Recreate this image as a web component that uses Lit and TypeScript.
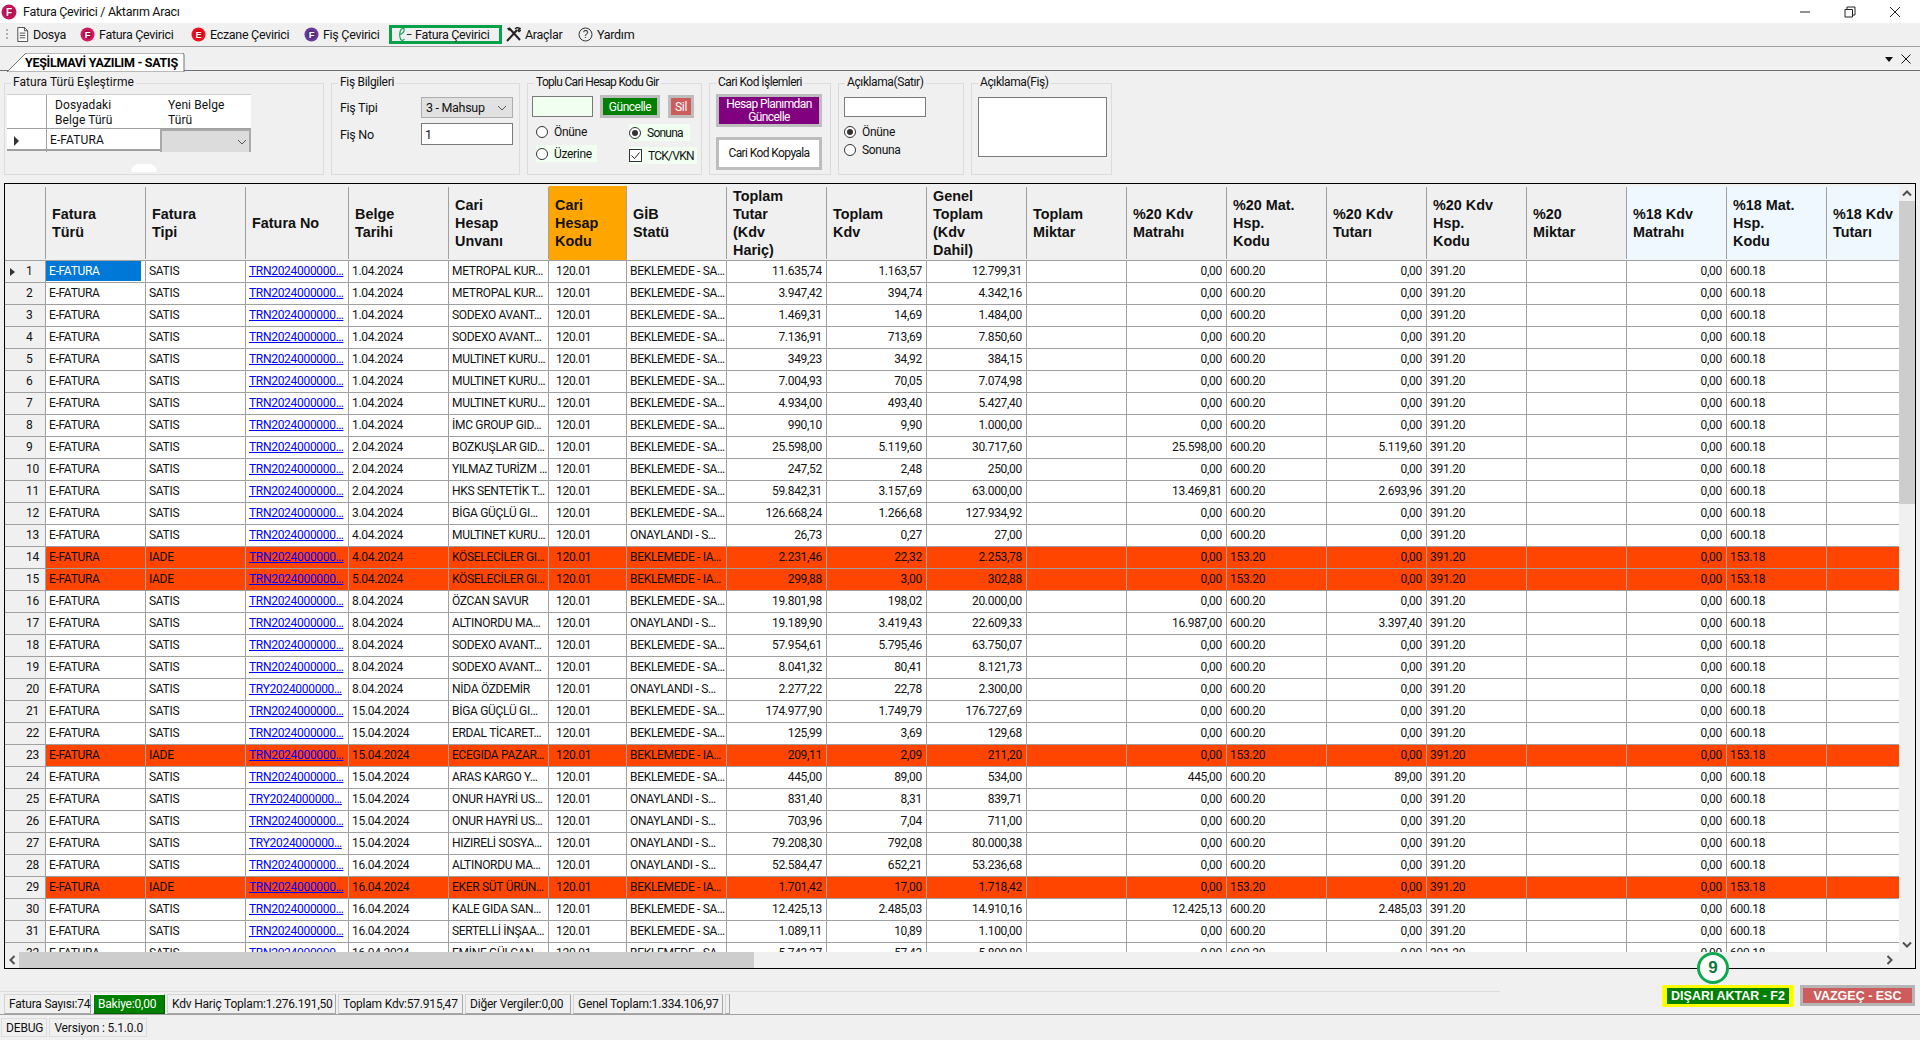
import { LitElement, html, css, svg } from "lit";
import { customElement } from "lit/decorators.js";

const headers: [string, string][] = [
  ["", ""],
  ["Fatura|Türü", ""],
  ["Fatura|Tipi", ""],
  ["Fatura No", ""],
  ["Belge|Tarihi", ""],
  ["Cari|Hesap|Unvanı", ""],
  ["Cari|Hesap|Kodu", "orange"],
  ["GİB|Statü", ""],
  ["Toplam|Tutar|(Kdv|Hariç)", ""],
  ["Toplam|Kdv", ""],
  ["Genel|Toplam|(Kdv|Dahil)", ""],
  ["Toplam|Miktar", ""],
  ["%20 Kdv|Matrahı", ""],
  ["%20 Mat.|Hsp.|Kodu", ""],
  ["%20 Kdv|Tutarı", ""],
  ["%20 Kdv|Hsp.|Kodu", ""],
  ["%20|Miktar", ""],
  ["%18 Kdv|Matrahı", "alice"],
  ["%18 Mat.|Hsp.|Kodu", "alice"],
  ["%18 Kdv|Tutarı", "alice"],
];

// type|prefix|date|name|status|tutar|kdv|toplam|m20|t20
const raw = `S|N|1.04.2024|METROPAL KUR…|B|11.635,74|1.163,57|12.799,31
S|N|1.04.2024|METROPAL KUR…|B|3.947,42|394,74|4.342,16
S|N|1.04.2024|SODEXO AVANT…|B|1.469,31|14,69|1.484,00
S|N|1.04.2024|SODEXO AVANT…|B|7.136,91|713,69|7.850,60
S|N|1.04.2024|MULTINET KURU…|B|349,23|34,92|384,15
S|N|1.04.2024|MULTINET KURU…|B|7.004,93|70,05|7.074,98
S|N|1.04.2024|MULTINET KURU…|B|4.934,00|493,40|5.427,40
S|N|1.04.2024|İMC GROUP GID…|B|990,10|9,90|1.000,00
S|N|2.04.2024|BOZKUŞLAR GID…|B|25.598,00|5.119,60|30.717,60|25.598,00|5.119,60
S|N|2.04.2024|YILMAZ TURİZM …|B|247,52|2,48|250,00
S|N|2.04.2024|HKS SENTETİK T…|B|59.842,31|3.157,69|63.000,00|13.469,81|2.693,96
S|N|3.04.2024|BİGA GÜÇLÜ GI…|B|126.668,24|1.266,68|127.934,92
S|N|4.04.2024|MULTINET KURU…|O|26,73|0,27|27,00
I|N|4.04.2024|KÖSELECİLER GI…|B|2.231,46|22,32|2.253,78
I|N|5.04.2024|KÖSELECİLER GI…|B|299,88|3,00|302,88
S|N|8.04.2024|ÖZCAN SAVUR|B|19.801,98|198,02|20.000,00
S|N|8.04.2024|ALTINORDU MA…|O|19.189,90|3.419,43|22.609,33|16.987,00|3.397,40
S|N|8.04.2024|SODEXO AVANT…|B|57.954,61|5.795,46|63.750,07
S|N|8.04.2024|SODEXO AVANT…|B|8.041,32|80,41|8.121,73
S|Y|8.04.2024|NİDA ÖZDEMİR|O|2.277,22|22,78|2.300,00
S|N|15.04.2024|BİGA GÜÇLÜ GI…|B|174.977,90|1.749,79|176.727,69
S|N|15.04.2024|ERDAL TİCARET…|B|125,99|3,69|129,68
I|N|15.04.2024|ECEGIDA PAZAR…|B|209,11|2,09|211,20
S|N|15.04.2024|ARAS KARGO Y…|B|445,00|89,00|534,00|445,00|89,00
S|Y|15.04.2024|ONUR HAYRİ US…|O|831,40|8,31|839,71
S|N|15.04.2024|ONUR HAYRİ US…|O|703,96|7,04|711,00
S|Y|15.04.2024|HIZIRELİ SOSYA…|O|79.208,30|792,08|80.000,38
S|N|16.04.2024|ALTINORDU MA…|O|52.584,47|652,21|53.236,68
I|N|16.04.2024|EKER SÜT ÜRÜN…|B|1.701,42|17,00|1.718,42
S|N|16.04.2024|KALE GIDA SAN…|B|12.425,13|2.485,03|14.910,16|12.425,13|2.485,03
S|N|16.04.2024|SERTELLİ İNŞAA…|B|1.089,11|10,89|1.100,00
S|N|16.04.2024|EMİNE GÜLCAN|B|5.743,37|57,43|5.800,80`;

const rows = raw.split("\n").map((l) => {
  const p = l.split("|");
  return {
    iade: p[0] === "I",
    no: (p[1] === "Y" ? "TRY" : "TRN") + "2024000000…",
    date: p[2],
    name: p[3],
    status: p[4] === "O" ? "ONAYLANDI - S…" : p[0] === "I" ? "BEKLEMEDE - IA…" : "BEKLEMEDE - SA…",
    tutar: p[5],
    kdv: p[6],
    toplam: p[7],
    m20: p[8] ?? "0,00",
    t20: p[9] ?? "0,00",
  };
});

const circle = (a: string, b: string, letter: string) => html`<svg class="ic" viewBox="0 0 16 16">
  <circle cx="8" cy="8" r="7.5" fill="${a}"></circle>
  <circle cx="8" cy="8" r="5" fill="${b}"></circle>
  <text x="8" y="11.5" text-anchor="middle" font-family="Liberation Sans" font-weight="700" font-size="10" fill="#fff">${letter}</text>
</svg>`;

const radio = (on = false) => html`<span class="radio ${on ? "on" : ""}"></span>`;

const hdr = (s: string) => s.split("|").map((t) => html`<span>${t}</span>`);

const doc = svg`<path d="M1.500 .5h7l3.500 3.500v11.500h-10.500z" fill="#fff" stroke="#444"/><path d="M8.500 .5v3.500h3.500M3.500 6.500h6M3.500 9h6M3.500 11.500h6" fill="none" stroke="#444"/>`;

@customElement("app-root")
export class AppRoot extends LitElement {
  static styles = css`
    :host {
      display: block;
      width: 1920px;
      height: 1040px;
      overflow: hidden;
      background: #f0f0f0;
      font-family: Roboto, "Noto Sans", sans-serif;
      font-size: 12px;
      letter-spacing: -0.3px;
      color: #111;
    }
    .page { display: flex; flex-direction: column; height: 1040px; }
    .title { height: 23px; background: #fff; display: flex; align-items: center; padding: 0 3px 0 1px; font-size: 12.5px; }
    .title .ic { width: 16px; height: 16px; margin-right: 6px; }
    .title .name { flex: 1; }
    .wbtn { width: 45px; display: flex; justify-content: center; }
    .wbtn svg { width: 12px; height: 12px; }
    .toolbar { height: 24px; box-sizing: border-box; border-bottom: 1px solid #a0a0a0; padding: 0 0 1px 16px; display: grid; grid-template-columns: 64px 111px 113px 85px 117px 72px 1fr; align-items: center; position: relative; font-size: 12.5px; }
    .grip { position: absolute; left: 6px; top: 6px; width: 2px; height: 11px; background: repeating-linear-gradient(#b0b0b0 0 2px, transparent 2px 4px); }
    .tool { display: flex; align-items: center; gap: 4px; height: 19px; }
    .ic { width: 15px; height: 15px; flex: none; }
    .doc { width: 13px; height: 15px; flex: none; }
    .boxed { box-sizing: border-box; width: 113px; border: 3px solid #0aa04a; padding-left: 5px; gap: 2px; }
    .boxed .ic { width: 16px; }
    .tabs { height: 24px; box-sizing: border-box; border-bottom: 1px solid #707070; display: flex; align-items: flex-end; justify-content: space-between; padding: 0 9px 0 7px; }
    .tab { position: relative; width: 178px; height: 18px; display: flex; align-items: center; padding-left: 18px; box-sizing: border-box; font-weight: 700; font-size: 12.5px; margin-bottom: -1px; color: #000; }
    .tab svg { position: absolute; left: 0; top: 0; width: 178px; height: 19px; }
    .tab span { position: relative; }
    .tabctl { display: flex; gap: 8px; align-items: center; height: 22px; }
    .tri { width: 0; height: 0; border: 4.5px solid transparent; border-top: 5px solid #111; border-bottom: 0; }
    .filters { height: 112px; box-sizing: border-box; padding: 4px 0 0 4px; display: flex; gap: 7px; }
    fieldset { margin: 0; padding: 0; height: 100px; box-sizing: border-box; border: 1px solid #dcdcdc; min-width: 0; position: relative; }
    legend { margin-left: 6px; padding: 0 2px; line-height: 15px; height: 16px; }
    .g1 { width: 320px; } .g2 { width: 189px; } .g3 { width: 175px; } .g4 { width: 122px; } .g5 { width: 126px; } .g6 { width: 141px; }
    .g1 legend { letter-spacing: 0.05px; }
    .g3 legend { letter-spacing: -0.7px; }
    .g4 legend { letter-spacing: -0.55px; }
    .g5 legend, .g6 legend { letter-spacing: -0.4px; }
    .mini { margin: 3px 0 0 2px; display: grid; grid-template-columns: 40px 113px 91px; grid-template-rows: 34px 23px; background: #fff; border-top: 1px solid #cfcfcf; box-sizing: border-box; width: 244px; height: 57px; border-bottom: 2px solid #a0a0a0; letter-spacing: 0.1px; }
    .mini > div { box-sizing: border-box; line-height: 15px; }
    .mh { padding: 3px 0 0 8px; border-bottom: 1px solid #a0a0a0; }
    .mh0 { border-right: 1px solid #a0a0a0; border-bottom: 1px solid #a0a0a0; }
    .mr0 { border-right: 1px solid #a0a0a0; display: flex; align-items: center; padding-left: 7px; }
    .mr1 { display: flex; align-items: center; padding-left: 3px; }
    .mselect { background: #dcdcdc; border: 2px solid #a9a9a9; border-bottom: 0; display: flex; align-items: center; justify-content: flex-end; padding-right: 2px; }
    .arrow { width: 0; height: 0; border: 4px solid transparent; border-left: 5px solid #333; border-right: 0; }
    .mr0 .arrow { border-width: 5px 0 5px 5px; }
    .hump { position: absolute; left: 126px; top: 73px; width: 26px; height: 8px; background: #fff; border-radius: 13px 13px 0 0; }
    .finfo { margin: 6px 0 0 8px; display: grid; grid-template-columns: 81px 92px; grid-template-rows: 21px 22px; row-gap: 5px; align-items: center; font-size: 12.5px; }
    .sel { box-sizing: border-box; height: 21px; background: #e1e1e1; border: 1px solid #adadad; display: flex; align-items: center; justify-content: space-between; padding: 0 5px 0 4px; }
    .inp { box-sizing: border-box; background: #fff; border: 1px solid #7a7a7a; display: flex; align-items: center; padding-left: 3px; }
    .finfo .inp { height: 22px; }
    .chev { width: 10px; height: 6px; flex: none; }
    .top3 { margin: 4px 0 0 4px; display: flex; align-items: center; }
    .top3 .inp { width: 61px; height: 21px; background: #f0fff0; margin-right: 7px; }
    .b { box-sizing: border-box; border: 3px solid #bdbdbd; display: flex; align-items: center; justify-content: center; text-align: center; }
    .bg { background: #008000; color: #fff; width: 60px; height: 23px; margin-right: 8px; letter-spacing: -0.5px; }
    .br { background: #cd5c5c; color: #fff; width: 26px; height: 23px; }
    .rgrid { margin: 5px 0 0 8px; display: grid; grid-template-columns: 93px 68px; grid-template-rows: 22px 20px; align-items: start; }
    .opt { display: flex; align-items: center; gap: 6px; height: 17px; }
    .hd { background: #f0fff0; }
    .w61 { width: 61px; }
    .mt1 { margin-top: 1px; } .mt2 { margin-top: 2px; }
    .tight { letter-spacing: -0.75px; }
    .radio { width: 12px; height: 12px; box-sizing: border-box; border: 1px solid #333; border-radius: 50%; background: #fff; flex: none; display: flex; align-items: center; justify-content: center; }
    .radio.on::after { content: ""; width: 6px; height: 6px; border-radius: 50%; background: #333; }
    .check { width: 13px; height: 13px; flex: none; }
    .btns4 { margin: 3px 0 0 6px; display: flex; flex-direction: column; gap: 10px; width: 106px; letter-spacing: -0.6px; }
    .btns4 .b { height: 33px; line-height: 13px; }
    .pur { background: #800080; color: #fff; }
    .wh { background: #fff; }
    .g5body { margin: 6px 0 0 5px; display: flex; flex-direction: column; }
    .g5body .inp { width: 82px; height: 20px; margin-bottom: 6px; }
    .g5body .opt { height: 18px; }
    .ta { margin: 6px 0 0 6px; width: 129px; height: 60px; box-sizing: border-box; background: #fff; border: 1px solid #7a7a7a; }
    .grid { margin-left: 4px; width: 1912px; height: 786px; box-sizing: border-box; border: 1px solid #000; padding-top: 2px; display: grid; grid-template-columns: 1fr 16px; grid-template-rows: 1fr 16px; }
    .view { overflow: hidden; background: #fff; }
    .row { display: grid; grid-template-columns: 41px 100px 100px 103px 100px 100px 78px repeat(13, 100px); width: 2000px; height: 22px; }
    .head { height: 75px; background: #f0f0f0; }
    .hc { box-sizing: border-box; display: flex; flex-direction: column; justify-content: center; padding: 0 0 0 6px; height: 75px; border-bottom: 1px solid #a0a0a0; font-family: "Liberation Sans", Arial, sans-serif; font-weight: 700; font-size: 14.4px; line-height: 18px; letter-spacing: 0; position: relative; }
    .hc::after { content: ""; position: absolute; right: 0; top: 1px; bottom: 1px; width: 1px; background: #a0a0a0; }
    .hc.orange { background: #ffa500; }
    .hc.alice { background: #f0f8ff; }
    .c { box-sizing: border-box; border-right: 1px solid #a0a0a0; border-bottom: 1px solid #a0a0a0; line-height: 21px; padding: 0 4px 0 3px; white-space: nowrap; overflow: hidden; }
    .r { text-align: right; padding-right: 4px; }
    .kod { padding-left: 7px; }
    .num { background: #f0f0f0; display: flex; align-items: center; padding: 0 0 0 5px; gap: 0; }
    .num b { font-weight: 400; margin-left: auto; width: 24px; text-align: left; padding-left: 5px; box-sizing: border-box; }
    .iade .c:not(.num) { background: #ff4500; }
    .sel1 { background: #0078d7; color: #fff; box-shadow: inset -4px 0 0 #fff, inset 0 -1px 0 #fff; }
    a { color: #0000ff; text-decoration: underline; }
    .vs { background: #f0f0f0; position: relative; display: flex; flex-direction: column; align-items: center; }
    .vs .btn { height: 15px; display: flex; align-items: center; justify-content: center; flex: none; }
    .vs .thumb { width: 16px; height: 303px; background: #cdcdcd; flex: none; }
    .vs .sp { flex: 1; }
    .hs { background: #f0f0f0; display: flex; align-items: center; padding: 0 6px 0 4px; }
    .hs .thumb { height: 16px; width: 735px; background: #cdcdcd; margin-left: 3px; }
    .hs .sp { flex: 1; }
    .corner { background: #f0f0f0; }
    .actions { height: 46px; box-sizing: border-box; border-bottom: 1px solid #a0a0a0; display: flex; justify-content: space-between; padding-right: 5px; }
    .stat { width: 1500px; margin-top: 22px; height: 23px; box-sizing: border-box; border-top: 1px solid #dcdcdc; padding: 2px 0 0 4px; display: flex; gap: 2px; letter-spacing: -0.2px; }
    .sb { box-sizing: border-box; height: 20px; border: 1px solid #d4d4d4; border-right-color: #a8a8a8; border-bottom-color: #a8a8a8; padding: 0 4px; display: flex; align-items: center; white-space: nowrap; }
    .sb.grn { background: #008000; color: #fff; border-color: #fff #006000 #006000 #fff; }
    .sb.first { width: 87px; } .sb.w2 { width: 72px; } .sb.w3 { width: 169px; } .sb.w4 { width: 125px; } .sb.w5 { width: 106px; } .sb.w6 { width: 150px; } .sb.w7 { width: 5px; padding: 0; }
    .acts { display: flex; gap: 6px; margin-top: 16px; height: 22px; position: relative; font-family: "Liberation Sans", Arial, sans-serif; font-weight: 700; font-size: 12.5px; letter-spacing: 0; color: #fff; }
    .exp { box-sizing: border-box; width: 132px; height: 22px; border: solid #ffff00; border-width: 3px 5px; background: #008000; display: flex; align-items: center; justify-content: center; }
    .esc { box-sizing: border-box; width: 115px; height: 21px; border: 3px solid #b5b5b5; background: #cd5c5c; display: flex; align-items: center; justify-content: center; }
    .badge { position: absolute; left: 35px; top: -33px; width: 32px; height: 32px; box-sizing: border-box; border: 3.5px solid #0fa84f; border-radius: 50%; background: #fff; color: #0b7a3a; display: flex; align-items: center; justify-content: center; font-size: 17px; z-index: 2; }
    .foot { display: flex; gap: 2px; padding: 3px 0 0 1px; letter-spacing: -0.15px; }
    .fb { box-sizing: border-box; height: 19px; border: 1px solid #dcdcdc; padding: 0 3px 0 4px; display: flex; align-items: center; }
  `;

  render() {
    const chev = html`<svg class="chev" viewBox="0 0 10 6"><path d="M1 1l4 4 4-4" fill="none" stroke="#555"/></svg>`;
    return html`<div class="page">
      <div class="title">
        ${circle("#c2185b", "#b0124f", "F")}
        <span class="name">Fatura Çevirici / Aktarım Aracı</span>
        <span class="wbtn"><svg viewBox="0 0 12 12"><path d="M1 6h10" stroke="#222"/></svg></span>
        <span class="wbtn"><svg viewBox="0 0 12 12"><path d="M3 3V1h8v8H9M1 3.5h7.5V11H1z" fill="none" stroke="#222"/></svg></span>
        <span class="wbtn"><svg viewBox="0 0 12 12"><path d="M1 1l10 10M11 1L1 11" stroke="#222"/></svg></span>
      </div>
      <div class="toolbar">
        <span class="grip"></span>
        <div class="tool"><svg class="doc" viewBox="0 0 13 16">${doc}</svg>Dosya</div>
        <div class="tool">${circle("#d81b60", "#a8124e", "F")}Fatura Çevirici</div>
        <div class="tool">${circle("#f01020", "#d00010", "E")}Eczane Çevirici</div>
        <div class="tool">${circle("#6a3a9a", "#56307e", "F")}Fiş Çevirici</div>
        <div class="tool boxed"><svg class="ic" viewBox="0 0 16 16"><path d="M2 8c3 0 6-3 5-6-.8-1.500-3-.5-4 2-1 3-1 8 1 10 1 .6 2.500 0 3.500-1" fill="none" stroke="#0a9e4a" stroke-width="1.200"/><path d="M10 8h5" stroke="#222"/></svg>Fatura Çevirici</div>
        <div class="tool"><svg class="ic" viewBox="0 0 15 15"><path d="M1 14L11 3M3 1l11 12" stroke="#222" stroke-width="2"/><path d="M9 2l2-1.500 3 1-2 2 1 1 2-1.500" fill="none" stroke="#222" stroke-width="1.500"/><path d="M1 1.500l2-1 1.500 2-1.500 1.500z" fill="#222"/></svg>Araçlar</div>
        <div class="tool"><svg class="ic" viewBox="0 0 15 15"><circle cx="7.500" cy="7.500" r="6.500" fill="none" stroke="#333"/><text x="7.500" y="11" text-anchor="middle" font-family="Liberation Sans" font-size="10" fill="#222">?</text></svg>Yardım</div>
      </div>
      <div class="tabs">
        <div class="tab">
          <svg viewBox="0 0 178 19"><path d="M0 19L18 1q1-1 2-1h155q2 0 2 2v17z" fill="#fff" stroke="#707070"/></svg>
          <span>YEŞİLMAVİ YAZILIM - SATIŞ</span>
        </div>
        <div class="tabctl"><span class="tri"></span><svg width="10" height="10" viewBox="0 0 10 10"><path d="M.5.5l9 9M9.500.5l-9 9" stroke="#111"/></svg></div>
      </div>
      <div class="filters">
        <fieldset class="g1">
          <legend>Fatura Türü Eşleştirme</legend>
          <div class="mini">
            <div class="mh0"></div>
            <div class="mh">Dosyadaki<br />Belge Türü</div>
            <div class="mh">Yeni Belge<br />Türü</div>
            <div class="mr0"><span class="arrow"></span></div>
            <div class="mr1">E-FATURA</div>
            <div class="mselect">${chev}</div>
          </div>
          <span class="hump"></span>
        </fieldset>
        <fieldset class="g2">
          <legend>Fiş Bilgileri</legend>
          <div class="finfo">
            <span>Fiş Tipi</span>
            <div class="sel"><span>3 - Mahsup</span>${chev}</div>
            <span>Fiş No</span>
            <div class="inp">1</div>
          </div>
        </fieldset>
        <fieldset class="g3">
          <legend>Toplu Cari Hesap Kodu Gir</legend>
          <div class="top3">
            <div class="inp"></div>
            <div class="b bg">Güncelle</div>
            <div class="b br">Sil</div>
          </div>
          <div class="rgrid">
            <label class="opt w61">${radio()}Önüne</label>
            <label class="opt hd w61 mt1 tight">${radio(true)}Sonuna</label>
            <label class="opt hd w61">${radio()}Üzerine</label>
            <label class="opt hd mt2 tight"><svg class="check" viewBox="0 0 13 13"><rect x=".5" y=".5" width="12" height="12" fill="#fff" stroke="#333"></rect><path d="M2.500 6.500l3 3 5-6" fill="none" stroke="#222"></path></svg>TCK/VKN</label>
          </div>
        </fieldset>
        <fieldset class="g4">
          <legend>Cari Kod İşlemleri</legend>
          <div class="btns4">
            <div class="b pur">Hesap Planımdan<br />Güncelle</div>
            <div class="b wh">Cari Kod Kopyala</div>
          </div>
        </fieldset>
        <fieldset class="g5">
          <legend>Açıklama(Satır)</legend>
          <div class="g5body">
            <div class="inp"></div>
            <label class="opt">${radio(true)}Önüne</label>
            <label class="opt">${radio()}Sonuna</label>
          </div>
        </fieldset>
        <fieldset class="g6">
          <legend>Açıklama(Fiş)</legend>
          <div class="ta"></div>
        </fieldset>
      </div>
      <div class="grid">
        <div class="view">
          <div class="row head">${headers.map(([t, c]) => html`<div class="hc ${c}">${t ? hdr(t) : ""}</div>`)}</div>
          ${rows.map(
            (r, i) => html`<div class="row ${r.iade ? "iade" : ""}">
              <div class="c num">${i === 0 ? html`<span class="arrow"></span>` : ""}<b>${i + 1}</b></div>
              <div class="c ${i === 0 ? "sel1" : ""}">E-FATURA</div>
              <div class="c">${r.iade ? "IADE" : "SATIS"}</div>
              <div class="c"><a>${r.no}</a></div>
              <div class="c">${r.date}</div>
              <div class="c">${r.name}</div>
              <div class="c kod">120.01</div>
              <div class="c">${r.status}</div>
              <div class="c r">${r.tutar}</div>
              <div class="c r">${r.kdv}</div>
              <div class="c r">${r.toplam}</div>
              <div class="c"></div>
              <div class="c r">${r.m20}</div>
              <div class="c">${r.iade ? "153.20" : "600.20"}</div>
              <div class="c r">${r.t20}</div>
              <div class="c">391.20</div>
              <div class="c"></div>
              <div class="c r">0,00</div>
              <div class="c">${r.iade ? "153.18" : "600.18"}</div>
              <div class="c"></div>
            </div>`
          )}
        </div>
        <div class="vs">
          <div class="btn"><svg width="10" height="7" viewBox="0 0 10 7"><path d="M1 5.500l4-4 4 4" fill="none" stroke="#505050" stroke-width="2"/></svg></div>
          <div class="thumb"></div>
          <div class="sp"></div>
          <div class="btn"><svg width="10" height="7" viewBox="0 0 10 7"><path d="M1 1.500l4 4 4-4" fill="none" stroke="#505050" stroke-width="2"/></svg></div>
        </div>
        <div class="hs">
          <svg width="7" height="10" viewBox="0 0 7 10"><path d="M5.500 1l-4 4 4 4" fill="none" stroke="#505050" stroke-width="2"/></svg>
          <div class="thumb"></div>
          <div class="sp"></div>
          <svg width="7" height="10" viewBox="0 0 7 10"><path d="M1.500 1l4 4-4 4" fill="none" stroke="#505050" stroke-width="2"/></svg>
        </div>
        <div class="corner"></div>
      </div>
      <div class="actions">
        <div class="stat">
          <div class="sb first">Fatura Sayısı:74</div>
          <div class="sb grn w2">Bakiye:0,00</div>
          <div class="sb w3">Kdv Hariç Toplam:1.276.191,50</div>
          <div class="sb w4">Toplam Kdv:57.915,47</div>
          <div class="sb w5">Diğer Vergiler:0,00</div>
          <div class="sb w6">Genel Toplam:1.334.106,97</div>
          <div class="sb w7"></div>
        </div>
        <div class="acts">
          <div class="badge">9</div>
          <div class="exp">DIŞARI AKTAR - F2</div>
          <div class="esc">VAZGEÇ - ESC</div>
        </div>
      </div>
      <div class="foot">
        <div class="fb">DEBUG</div>
        <div class="fb">Versiyon : 5.1.0.0</div>
      </div>
    </div>`;
  }
}
